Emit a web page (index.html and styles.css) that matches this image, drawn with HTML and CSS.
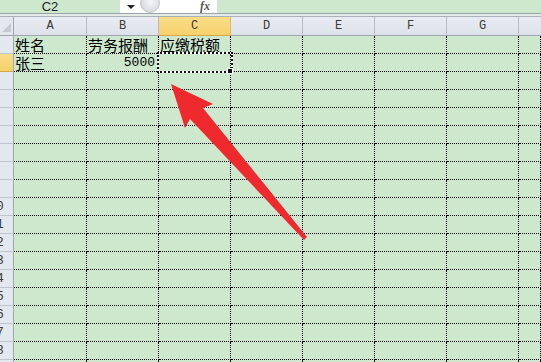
FILE: index.html
```html
<!DOCTYPE html>
<html>
<head lang="zh">
    <meta charset="UTF-8">
    <title>工作表</title>
    <link rel="stylesheet" href="styles.css">
</head>
<body>
<div class="formula-bar">
    <div class="name-box">C2</div>
    <div class="formula-tools">
        <span class="drop"></span>
        <span class="knob"></span>
        <span class="fx">fx</span>
    </div>
</div>
<div class="divider"></div>
<div class="sheet">
    <div class="corner"><span class="tri"></span></div>
    <div class="col-head">A</div>
    <div class="col-head">B</div>
    <div class="col-head active">C</div>
    <div class="col-head">D</div>
    <div class="col-head">E</div>
    <div class="col-head">F</div>
    <div class="col-head">G</div>
    <div class="col-head last"></div>

    <div class="row-head"><span>1</span></div>
    <div class="cell">姓名</div>
    <div class="cell">劳务报酬</div>
    <div class="cell">应缴税额</div>
    <div class="cell"></div><div class="cell"></div><div class="cell"></div><div class="cell"></div><div class="cell"></div>

    <div class="row-head active"><span>2</span></div>
    <div class="cell">张三</div>
    <div class="cell num">5000</div>
    <div class="cell current"><div class="sel"><span class="handle"></span></div></div>
    <div class="cell"></div><div class="cell"></div><div class="cell"></div><div class="cell"></div><div class="cell"></div>
</div>
<svg class="arrow" width="541" height="362" viewBox="0 0 541 362">
    <polygon points="171,84 213,104 203,108 307,237 304,240 190,119 185,128" fill="#ee2a2e"/>
</svg>
<script>
    var sheet = document.querySelector(".sheet");
    for (var r = 3; r <= 19; r++) {
        var html = '<div class="row-head"><span>' + r + '</span></div>';
        for (var c = 0; c < 8; c++) {
            html += '<div class="cell"></div>';
        }
        sheet.insertAdjacentHTML("beforeend", html);
    }
</script>
</body>
</html>
```

FILE: styles.css
```css
* {
    margin: 0;
    padding: 0;
    box-sizing: border-box;
}

body {
    width: 541px;
    height: 362px;
    overflow: hidden;
    position: relative;
    background: #cde8cd;
    font-family: "Liberation Sans", "Noto Sans CJK SC", sans-serif;
}

.formula-bar {
    display: flex;
    height: 13px;
}

.name-box {
    width: 120px;
    padding-right: 20px;
    text-align: center;
    font-size: 13px;
    line-height: 13px;
    color: #222;
    overflow: hidden;
}

.formula-tools {
    width: 97px;
    background: #fff;
    display: flex;
    align-items: center;
    position: relative;
    overflow: hidden;
}

.drop {
    width: 0;
    height: 0;
    margin-left: 7px;
    border-left: 4px solid transparent;
    border-right: 4px solid transparent;
    border-top: 4px solid #222;
}

.knob {
    width: 20px;
    height: 20px;
    margin-left: 5px;
    margin-top: -8px;
    border-radius: 50%;
    border: 1px solid #c3c7cc;
    background: radial-gradient(circle at 55% 45%, #f4f5f6 0, #e2e4e7 45%, #c9ccd1 100%);
}

.fx {
    margin-left: 40px;
    font-family: "Liberation Serif", serif;
    font-style: italic;
    font-weight: bold;
    font-size: 12px;
    line-height: 11px;
    color: #555;
}

.divider {
    height: 4px;
    border-top: 1px solid #9aa2ac;
    border-bottom: 1px solid #a9b0b9;
    background: #e4ebe5;
}

.sheet {
    display: grid;
    grid-template-columns: 14px 73px repeat(6, 72px) 1fr;
    grid-auto-rows: 18px;
    grid-template-rows: 19px;
}

.corner {
    background: #e3e7ee;
    border-right: 1px solid #9ea6b1;
    border-bottom: 1px solid #9ea6b1;
    position: relative;
}

.tri {
    position: absolute;
    right: 2px;
    bottom: 3px;
    width: 0;
    height: 0;
    border-left: 9px solid transparent;
    border-bottom: 9px solid #c4cad3;
}

.col-head {
    background: linear-gradient(#e9ecf2, #dde2ea);
    border-right: 1px solid #b4bbc6;
    border-bottom: 1px solid #9ea6b1;
    text-align: center;
    font-family: "Liberation Mono", monospace;
    font-size: 12px;
    line-height: 19px;
    color: #3a3a3a;
}

.col-head.active {
    background: linear-gradient(#f9dd8a, #f7d16a);
    border-right-color: #e0b95a;
    border-bottom-color: #d7a844;
}

.col-head.last {
    border-right: none;
}

.row-head {
    background: #e3e7ee;
    border-right: 1px solid #9ea6b1;
    border-bottom: 1px solid #bfc5ce;
    overflow: hidden;
    font-family: "Liberation Mono", monospace;
    font-size: 13px;
    line-height: 18px;
    color: #3a3a3a;
}

.row-head span {
    display: block;
    width: 26px;
    margin-left: -17px;
    text-align: center;
}

.row-head.active {
    background: linear-gradient(#f9dd8a, #f7d16a);
    border-bottom-color: #d7a844;
}

.cell {
    border-right: 1px dotted #000;
    border-bottom: 1px dotted #000;
    padding: 0 1px;
    font-family: "Noto Sans CJK SC", sans-serif;
    font-size: 15px;
    line-height: 17px;
    color: #000;
    white-space: nowrap;
    position: relative;
}

.cell.num {
    text-align: right;
    padding-right: 3px;
    font-family: "Liberation Mono", monospace;
    font-size: 13px;
}

.sel {
    position: absolute;
    top: -2px;
    left: -2px;
    width: 76px;
    height: 21px;
    border: 2px solid #fff;
    z-index: 2;
}

.sel::before {
    content: "";
    position: absolute;
    top: -2px;
    left: -2px;
    right: -2px;
    bottom: -2px;
    border: 2px dotted #111;
}

.handle {
    position: absolute;
    left: 68px;
    top: 14px;
    width: 6px;
    height: 6px;
    background: #111;
    border: 1px solid #fff;
}

.arrow {
    position: absolute;
    top: 0;
    left: 0;
    pointer-events: none;
}
```
